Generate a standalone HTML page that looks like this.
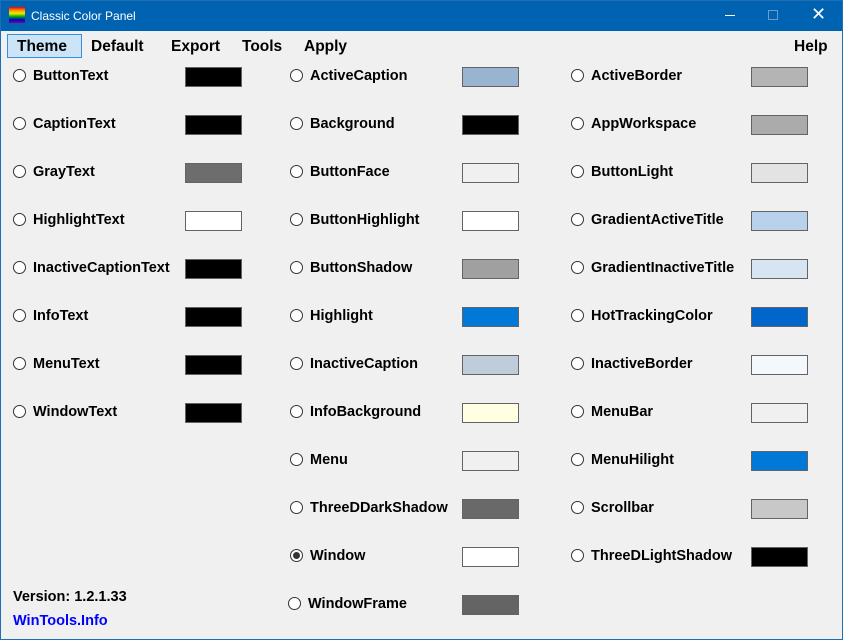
<!DOCTYPE html><html><head><style>
*{margin:0;padding:0;box-sizing:border-box}
body{width:843px;height:640px;background:#f0f0f0;position:relative;overflow:hidden;font-family:"Liberation Sans",Arial,sans-serif}
.bd{position:absolute;left:0;top:0;width:843px;height:640px;border:1px solid #1e6eb4;pointer-events:none}
.tb{position:absolute;left:0;top:0;width:843px;height:31px;background:#0063b1;color:#fff;font-size:12px}
.t{position:absolute;font-weight:bold;font-size:14.5px;color:#000;white-space:nowrap}
.r{position:absolute;width:13px;height:13px;border:1px solid #333;border-radius:50%;background:#fff}
.s{position:absolute;width:57px;height:20px;border:1px solid #646464}
.m{position:absolute;top:38px;font-weight:bold;font-size:15.5px}
</style></head><body>
<div class="tb">
<div style="position:absolute;left:9px;top:7px;width:16px;height:16px;background:linear-gradient(#e00 0,#f80 20%,#ee0 40%,#0a0 60%,#00d 80%,#808 100%)"></div>
<div style="position:absolute;left:31px;top:9px">Classic Color Panel</div>
<div style="position:absolute;left:725px;top:15px;width:10px;height:1px;background:#fff"></div>
<div style="position:absolute;left:768px;top:10px;width:10px;height:10px;border:1px solid #6a9ad0"></div>
<div style="position:absolute;left:811px;top:4px;font-size:18px">✕</div>
</div>
<div style="position:absolute;left:7px;top:34px;width:75px;height:24px;background:#cce4f7;border:1px solid #3b8fd9"></div>
<div class="m" style="left:17px">Theme</div>
<div class="m" style="left:91px">Default</div>
<div class="m" style="left:171px">Export</div>
<div class="m" style="left:242px">Tools</div>
<div class="m" style="left:304px">Apply</div>
<div class="m" style="left:794px">Help</div>
<div id="c"></div>
<div class="t" style="left:13px;top:589px">Version: 1.2.1.33</div>
<div class="t" style="left:13px;top:613px;color:#00f">WinTools.Info</div>
<div class="bd"></div>
<script>
var cols=[[19,33,185,[["ButtonText","#000"],["CaptionText","#000"],["GrayText","#6d6d6d"],["HighlightText","#fff"],["InactiveCaptionText","#000"],["InfoText","#000"],["MenuText","#000"],["WindowText","#000"]]],
[296,310,462,[["ActiveCaption","#99b4d1"],["Background","#000"],["ButtonFace","#f0f0f0"],["ButtonHighlight","#fff"],["ButtonShadow","#a0a0a0"],["Highlight","#0078d7"],["InactiveCaption","#bfcddb"],["InfoBackground","#ffffe1"],["Menu","#f0f0f0"],["ThreeDDarkShadow","#696969"],["Window","#fff"],["WindowFrame","#646464"]]],
[577,591,751,[["ActiveBorder","#b4b4b4"],["AppWorkspace","#ababab"],["ButtonLight","#e3e3e3"],["GradientActiveTitle","#b9d1ea"],["GradientInactiveTitle","#d7e4f2"],["HotTrackingColor","#0066cc"],["InactiveBorder","#f4f7fc"],["MenuBar","#f0f0f0"],["MenuHilight","#0078d7"],["Scrollbar","#c8c8c8"],["ThreeDLightShadow","#000"]]]];
var h="";cols.forEach(function(c){c[3].forEach(function(it,i){var y=76+48*i,rx=c[0],tx=c[1];if(it[0]=="WindowFrame"){y=604;rx=294;tx=308;}
h+='<div class="r" style="left:'+(rx-6)+'px;top:'+(y-7)+'px">'+(it[0]=="Window"?'<div style="position:absolute;left:2px;top:2px;width:7px;height:7px;border-radius:50%;background:#333"></div>':'')+'</div>';
h+='<div class="t" style="left:'+tx+'px;top:'+(y-8)+'px">'+it[0]+'</div>';
h+='<div class="s" style="left:'+c[2]+'px;top:'+(y-9)+'px;background:'+it[1]+'"></div>';});});
document.getElementById("c").innerHTML=h;
</script>
</body></html>
